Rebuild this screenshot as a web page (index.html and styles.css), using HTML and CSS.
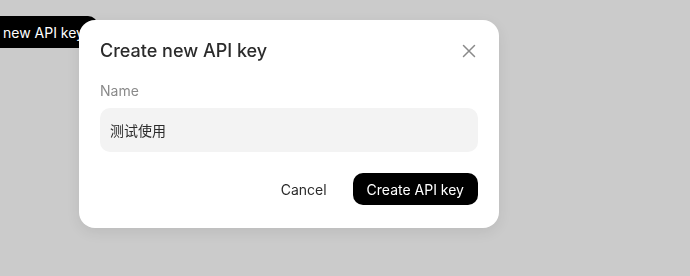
FILE: index.html
```html
<!DOCTYPE html>
<html lang="en">
<head>
    <meta charset="UTF-8">
    <meta name="viewport" content="width=device-width, initial-scale=1.0">
    <title>API keys</title>
    <link rel="stylesheet" href="styles.css">
</head>
<body>
    <header class="page-top">
        <button class="btn-dark open-btn">Create new API key</button>
    </header>

    <div class="overlay">
        <section class="modal">
            <div class="modal-head">
                <h2 class="modal-title">Create new API key</h2>
                <button class="close-btn" aria-label="Close">
                    <svg width="14" height="14" viewBox="0 0 14 14">
                        <path d="M1.5 1.5 L12.5 12.5 M12.5 1.5 L1.5 12.5" stroke="#8a8a8a" stroke-width="1.5" stroke-linecap="round" fill="none"/>
                    </svg>
                </button>
            </div>
            <label class="field-label" for="key-name">Name</label>
            <input class="field-input" id="key-name" type="text" value="测试使用">
            <div class="modal-actions">
                <button class="btn-plain">Cancel</button>
                <button class="btn-dark">Create API key</button>
            </div>
        </section>
    </div>
</body>
</html>
```

FILE: styles.css
```css
* {
    box-sizing: border-box;
}

body {
    margin: 0;
    background-color: #cbcbcb;
    font-family: Inter, "Noto Sans CJK SC", sans-serif;
    overflow: hidden;
}

.page-top {
    padding-top: 16px;
}

.btn-dark {
    height: 32px;
    padding: 0 14px;
    border: none;
    border-radius: 10px;
    background-color: #000;
    color: #fff;
    font-family: inherit;
    font-size: 14px;
}

.open-btn {
    margin-left: -59px;
}

.overlay {
    position: fixed;
    inset: 0;
    padding: 20px 0 0 79px;
}

.modal {
    width: 420px;
    padding: 21px 21px 23px;
    border-radius: 16px;
    background-color: #fff;
    box-shadow: 0 4px 14px rgba(0, 0, 0, 0.08);
}

.modal-head {
    display: flex;
    align-items: center;
    justify-content: space-between;
}

.modal-title {
    margin: 0;
    font-size: 18px;
    font-weight: 500;
    line-height: 20px;
    color: #2b2b2b;
}

.close-btn {
    display: flex;
    padding: 0;
    margin-right: 2px;
    border: none;
    background: none;
}

.field-label {
    display: block;
    margin-top: 21px;
    font-size: 14px;
    line-height: 18px;
    color: #8a8a8a;
}

.field-input {
    display: block;
    width: 100%;
    height: 44px;
    margin-top: 8px;
    padding: 0 10px;
    border: none;
    border-radius: 10px;
    background-color: #f3f3f3;
    font-family: inherit;
    font-size: 14px;
    color: #2b2b2b;
    outline: none;
}

.modal-actions {
    display: flex;
    justify-content: flex-end;
    gap: 12px;
    margin-top: 21px;
}

.btn-plain {
    height: 32px;
    padding: 0 14px;
    border: none;
    background: none;
    font-family: inherit;
    font-size: 14px;
    color: #2b2b2b;
}
```
